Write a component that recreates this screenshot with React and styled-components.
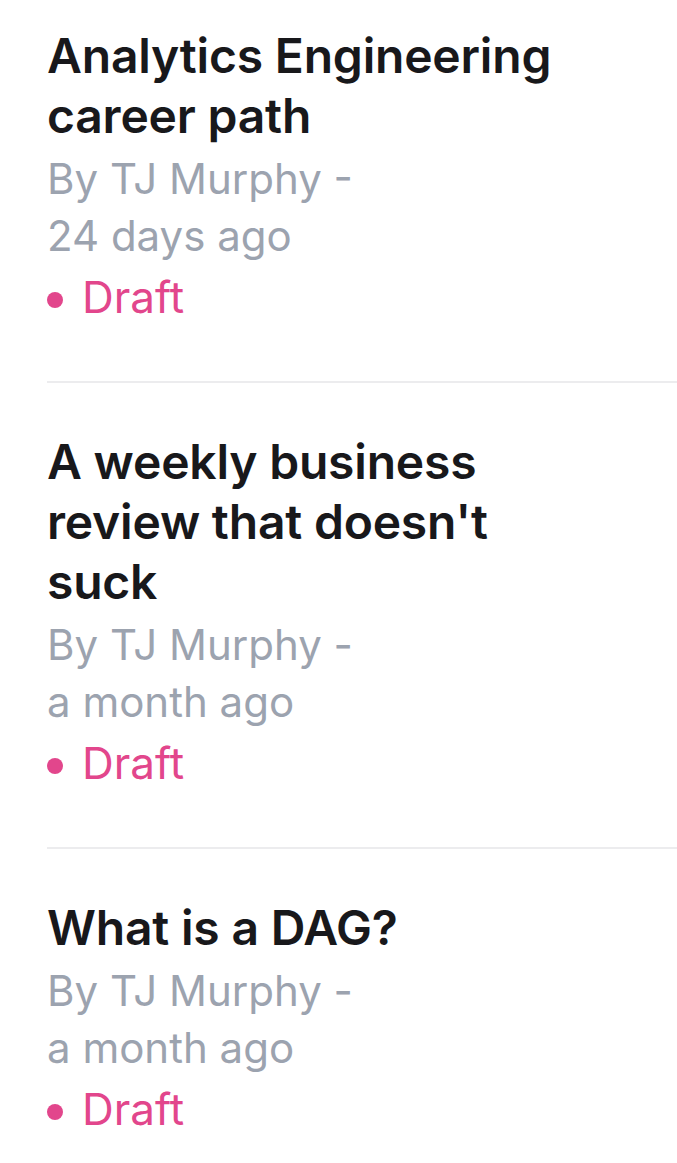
import React from 'react';
import styled, { createGlobalStyle } from 'styled-components';

const GlobalStyle = createGlobalStyle`
  html, body {
    margin: 0;
    padding: 0;
    background: #ffffff;
  }
  body {
    font-family: Inter, 'Noto Sans', sans-serif;
    -webkit-font-smoothing: antialiased;
  }
`;

const List = styled.div`
  padding-left: 47px;
`;

const Item = styled.article`
  padding: 49px 0 55px;
  border-bottom: 2px solid #ececee;

  &:first-child {
    padding-top: 26px;
  }

  &:last-child {
    border-bottom: none;
  }
`;

const Content = styled.div`
  max-width: 520px;
`;

const Title = styled.h2`
  margin: 0;
  font-size: 48px;
  line-height: 60px;
  font-weight: 600;
  color: #18181b;
  letter-spacing: -0.2px;
`;

const Meta = styled.p`
  margin: 4px 0 0;
  font-size: 42px;
  line-height: 57px;
  font-weight: 400;
  color: #9ca3af;
`;

const When = styled.span`
  white-space: nowrap;
`;

const Status = styled.div`
  display: flex;
  align-items: center;
  gap: 19px;
  margin-top: 4px;
  font-size: 44px;
  line-height: 58px;
  color: #e2468c;
`;

const Dot = styled.span`
  width: 16px;
  height: 16px;
  margin-top: 6px;
  border-radius: 50%;
  background: #e2468c;
  flex-shrink: 0;
`;

const posts = [
  { title: 'Analytics Engineering career path', author: 'TJ Murphy', when: '24 days ago' },
  { title: "A weekly business review that doesn't suck", author: 'TJ Murphy', when: 'a month ago' },
  { title: 'What is a DAG?', author: 'TJ Murphy', when: 'a month ago' },
];

export default function App() {
  return (
    <>
      <GlobalStyle />
      <List>
        {posts.map((post, i) => (
          <Item key={i}>
            <Content>
              <Title>{post.title}</Title>
              <Meta>
                By {post.author} - <When>{post.when}</When>
              </Meta>
              <Status>
                <Dot />
                Draft
              </Status>
            </Content>
          </Item>
        ))}
      </List>
    </>
  );
}
